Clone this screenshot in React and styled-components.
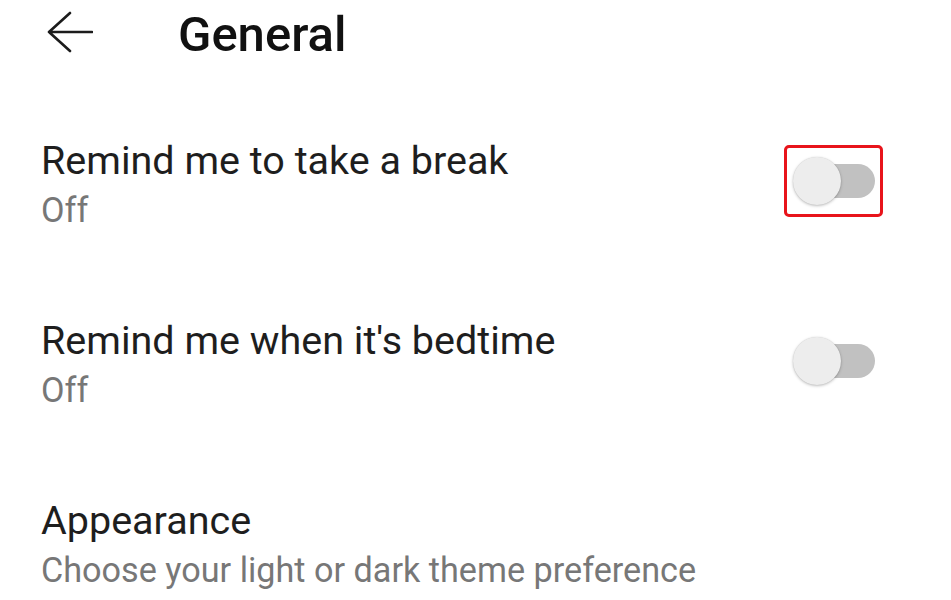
import React, { useState } from "react";
import styled, { createGlobalStyle } from "styled-components";

const settings = [
  { id: "break", title: "Remind me to take a break", sub: "Off", toggle: true, highlight: true },
  { id: "bedtime", title: "Remind me when it's bedtime", sub: "Off", toggle: true },
  { id: "appearance", title: "Appearance", sub: "Choose your light or dark theme preference" },
];

const App = () => {
  const [values, setValues] = useState({ break: false, bedtime: false });

  const flip = (id) => setValues({ ...values, [id]: !values[id] });

  return (
    <Page>
      <GlobalStyle />
      <Header>
        <BackButton aria-label="Back">
          <svg width="46" height="42" viewBox="0 0 46 42" fill="none">
            <path
              d="M23 2 L2 21 L23 40 M2 21 H45"
              stroke="#1c1c1c"
              strokeWidth="2.6"
              strokeLinecap="round"
              strokeLinejoin="round"
            />
          </svg>
        </BackButton>
        <Title>General</Title>
      </Header>
      <List>
        {settings.map((item) => (
          <Row key={item.id}>
            <Texts>
              <Label>{item.title}</Label>
              <Sub>{item.sub}</Sub>
            </Texts>
            {item.toggle && (
              <SwitchWrap highlight={item.highlight}>
                <Switch on={values[item.id]} onClick={() => flip(item.id)}>
                  <Thumb on={values[item.id]} />
                </Switch>
              </SwitchWrap>
            )}
          </Row>
        ))}
      </List>
    </Page>
  );
};

export default App;

const GlobalStyle = createGlobalStyle`
  body {
    margin: 0;
    background: #ffffff;
    font-family: Roboto, "Noto Sans", Arial, sans-serif;
  }
`;

const Page = styled.div`
  width: 951px;
  height: 600px;
  overflow: hidden;
  background: #ffffff;
`;

const Header = styled.div`
  display: flex;
  align-items: center;
  height: 70px;
  padding-left: 47px;
`;

const BackButton = styled.button`
  border: none;
  background: none;
  padding: 0;
  display: flex;
  margin-top: -6px;
  cursor: pointer;
`;

const Title = styled.h1`
  margin: 0 0 0 85px;
  font-size: 49px;
  line-height: 58px;
  font-weight: 500;
  color: #111111;
`;

const List = styled.div`
  display: flex;
  flex-direction: column;
  padding: 68px 76px 0 41px;
  gap: 88px;
`;

const Row = styled.div`
  display: flex;
  align-items: center;
  justify-content: space-between;
`;

const Texts = styled.div`
  display: flex;
  flex-direction: column;
  gap: 6px;
`;

const Label = styled.div`
  font-size: 39.5px;
  line-height: 46px;
  color: #1e1e1e;
`;

const Sub = styled.div`
  font-size: 34.2px;
  line-height: 40px;
  color: #777777;
`;

const SwitchWrap = styled.div`
  position: relative;
  display: flex;
  margin-top: -6px;
  ${(props) =>
    props.highlight &&
    `
    &::after {
      content: "";
      position: absolute;
      inset: -11px -8px -11px -9px;
      border: 3px solid #e8141b;
      border-radius: 5px;
      pointer-events: none;
    }
  `}
`;

const Switch = styled.div`
  position: relative;
  width: 82px;
  height: 50px;
  display: flex;
  align-items: center;
  cursor: pointer;

  &::before {
    content: "";
    position: absolute;
    left: 24px;
    right: 0;
    height: 34px;
    border-radius: 17px;
    background: ${(props) => (props.on ? "#9fc0f2" : "#c1c1c1")};
  }
`;

const Thumb = styled.div`
  position: relative;
  width: 48px;
  height: 48px;
  border-radius: 50%;
  margin-left: ${(props) => (props.on ? "33px" : "0")};
  background: ${(props) => (props.on ? "#3e7de6" : "#ededed")};
  box-shadow: 0 1px 3px rgba(0, 0, 0, 0.25), 0 0 1px rgba(0, 0, 0, 0.15);
`;
